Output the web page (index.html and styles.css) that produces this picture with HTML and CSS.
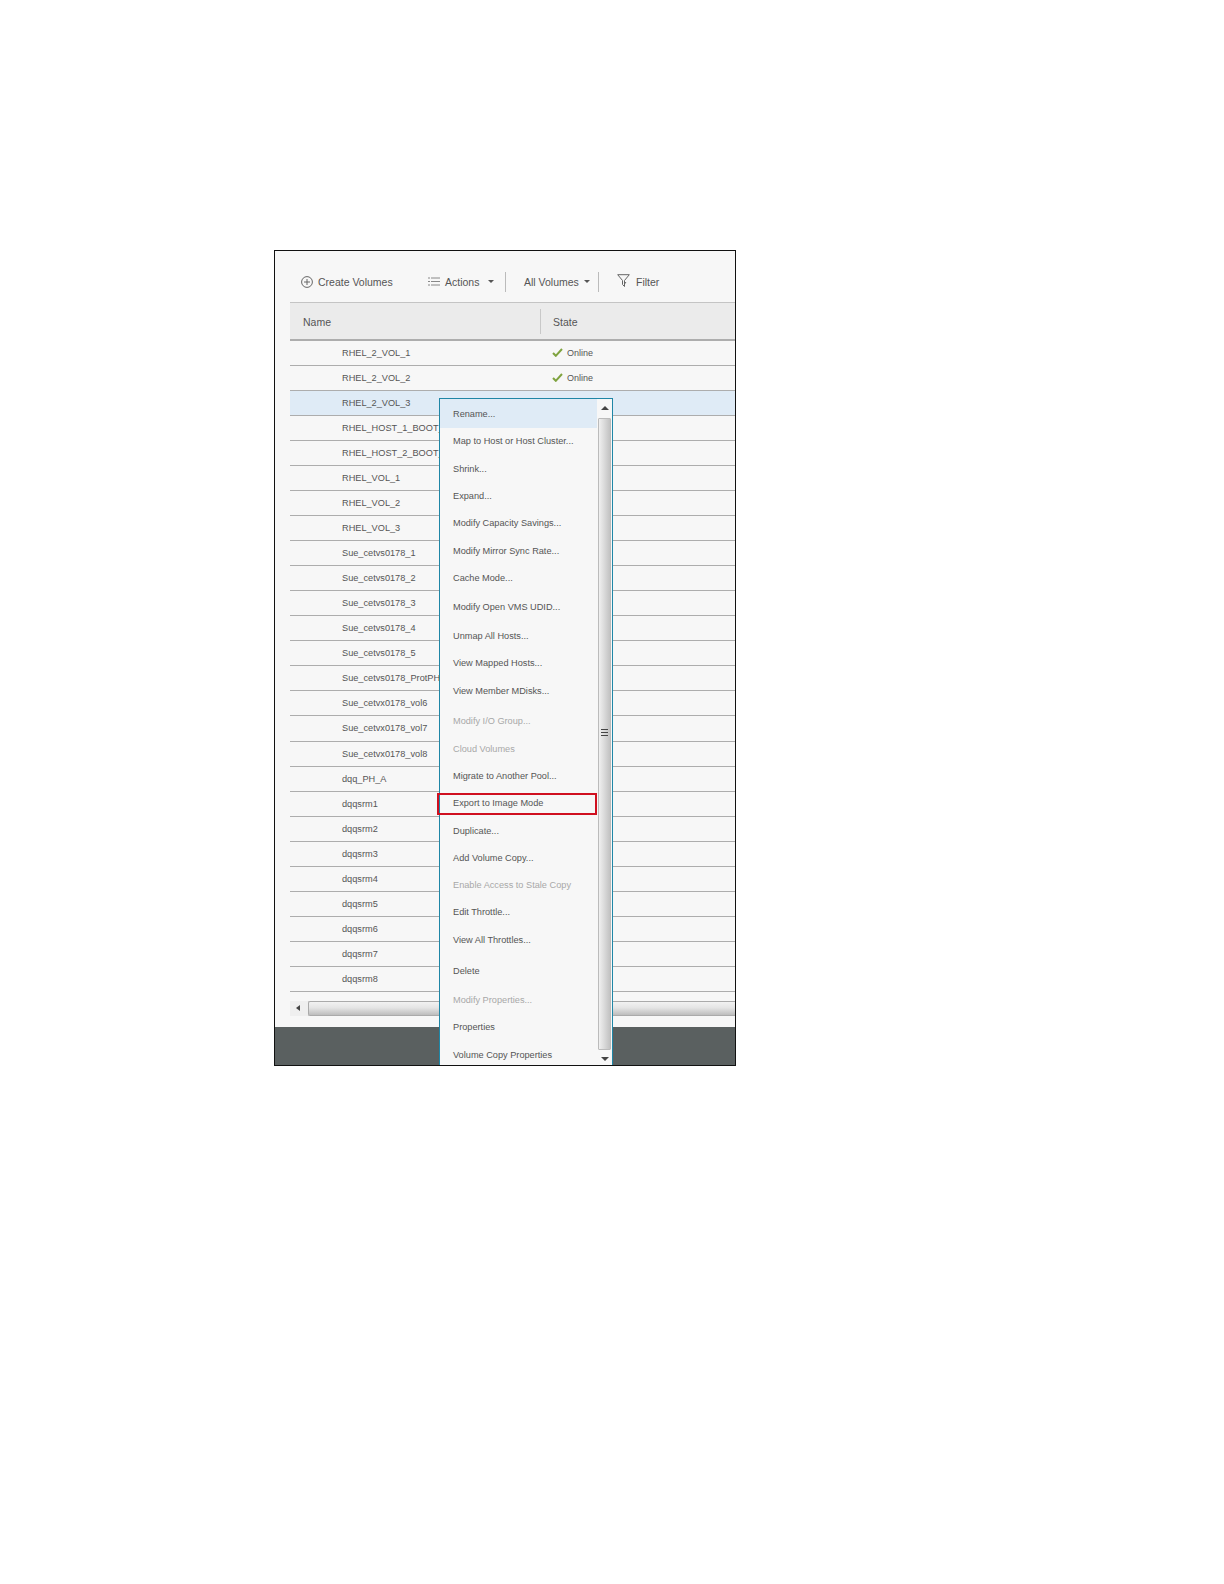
FILE: index.html
```html
<!DOCTYPE html>
<html lang="en">
<head>
<meta charset="utf-8">
<title>Volumes</title>
<link rel="stylesheet" href="styles.css">
</head>
<body>
<main class="frame">
  <div class="panel">
    <div class="toolbar">
      <div class="tool tool-create">
        <svg class="ico" width="12" height="12" viewBox="0 0 12 12"><circle cx="6" cy="6" r="5.400" fill="none" stroke="#666" stroke-width="1"/><path d="M6 3v6M3 6h6" stroke="#666" stroke-width="1" fill="none"/></svg>
        <span>Create Volumes</span>
      </div>
      <div class="tool tool-actions">
        <svg class="ico" width="12" height="9" viewBox="0 0 12 9"><path d="M0 1h2M3 1h9M0 4.500h2M3 4.500h9M0 8h2M3 8h9" stroke="#888" stroke-width="1" fill="none"/></svg>
        <span>Actions</span>
        <i class="caret"></i>
      </div>
      <div class="tool tool-all">
        <span>All Volumes</span>
        <i class="caret"></i>
      </div>
      <div class="tool tool-filter">
        <svg class="ico ico-filter" width="13" height="14" viewBox="0 0 13 14"><path d="M.7.700h11.600L7.500 6.500v6L5.500 10.500v-4z" fill="none" stroke="#666" stroke-width="1"/><path d="M9 8l-1.500 2" stroke="#666" fill="none"/></svg>
        <span>Filter</span>
      </div>
    </div>
    <div class="table">
      <div class="thead">
        <div class="th th-name">Name</div>
        <div class="th th-state">State</div>
      </div>
      <div class="row"><span class="name">RHEL_2_VOL_1</span><span class="state"><svg class="check" width="11" height="9" viewBox="0 0 11 9"><path d="M1 5l2.800 2.800L10 1" fill="none" stroke="#7fa33f" stroke-width="2"/></svg>Online</span></div>
      <div class="row"><span class="name">RHEL_2_VOL_2</span><span class="state"><svg class="check" width="11" height="9" viewBox="0 0 11 9"><path d="M1 5l2.800 2.800L10 1" fill="none" stroke="#7fa33f" stroke-width="2"/></svg>Online</span></div>
      <div class="row row-selected"><span class="name">RHEL_2_VOL_3</span></div>
      <div class="row"><span class="name">RHEL_HOST_1_BOOT_</span></div>
      <div class="row"><span class="name">RHEL_HOST_2_BOOT_</span></div>
      <div class="row"><span class="name">RHEL_VOL_1</span></div>
      <div class="row"><span class="name">RHEL_VOL_2</span></div>
      <div class="row"><span class="name">RHEL_VOL_3</span></div>
      <div class="row"><span class="name">Sue_cetvs0178_1</span></div>
      <div class="row"><span class="name">Sue_cetvs0178_2</span></div>
      <div class="row"><span class="name">Sue_cetvs0178_3</span></div>
      <div class="row"><span class="name">Sue_cetvs0178_4</span></div>
      <div class="row"><span class="name">Sue_cetvs0178_5</span></div>
      <div class="row"><span class="name">Sue_cetvs0178_ProtPH</span></div>
      <div class="row"><span class="name">Sue_cetvx0178_vol6</span></div>
      <div class="row"><span class="name">Sue_cetvx0178_vol7</span></div>
      <div class="row"><span class="name">Sue_cetvx0178_vol8</span></div>
      <div class="row"><span class="name">dqq_PH_A</span></div>
      <div class="row"><span class="name">dqqsrm1</span></div>
      <div class="row"><span class="name">dqqsrm2</span></div>
      <div class="row"><span class="name">dqqsrm3</span></div>
      <div class="row"><span class="name">dqqsrm4</span></div>
      <div class="row"><span class="name">dqqsrm5</span></div>
      <div class="row"><span class="name">dqqsrm6</span></div>
      <div class="row"><span class="name">dqqsrm7</span></div>
      <div class="row"><span class="name">dqqsrm8</span></div>
    </div>
    <div class="hscroll">
      <span class="arrow-left"></span>
      <div class="hthumb"></div>
    </div>
    <div class="footer"></div>
  </div>
  <div class="menu">
    <ul class="items">
      <li class="item h27 active">Rename...</li>
      <li class="item h28">Map to Host or Host Cluster...</li>
      <li class="item h27">Shrink...</li>
      <li class="item h27">Expand...</li>
      <li class="item h28">Modify Capacity Savings...</li>
      <li class="item h27">Modify Mirror Sync Rate...</li>
      <li class="item h29">Cache Mode...</li>
      <li class="item h29">Modify Open VMS UDID...</li>
      <li class="item h27">Unmap All Hosts...</li>
      <li class="item h28">View Mapped Hosts...</li>
      <li class="item h30">View Member MDisks...</li>
      <li class="item h28 disabled">Modify I/O Group...</li>
      <li class="item h27 disabled">Cloud Volumes</li>
      <li class="item h27">Migrate to Another Pool...</li>
      <li class="item h28">Export to Image Mode</li>
      <li class="item h27">Duplicate...</li>
      <li class="item h27">Add Volume Copy...</li>
      <li class="item h27 disabled">Enable Access to Stale Copy</li>
      <li class="item h28">Edit Throttle...</li>
      <li class="item h31">View All Throttles...</li>
      <li class="item h29">Delete</li>
      <li class="item h27 disabled">Modify Properties...</li>
      <li class="item h28">Properties</li>
      <li class="item h27">Volume Copy Properties</li>
    </ul>
    <div class="vscroll">
      <span class="arrow-up"></span>
      <div class="vthumb"><i class="grip"></i></div>
      <span class="arrow-down"></span>
    </div>
    <div class="highlight"></div>
  </div>
</main>
</body>
</html>
```
FILE: styles.css
```css
* { box-sizing: border-box; }
html, body { margin: 0; padding: 0; background: #fff; }
body { width: 1224px; height: 1584px; padding: 250px 0 0 274px; font-family: "Liberation Sans", Arial, sans-serif; color: #555; }
.frame { position: relative; width: 462px; height: 816px; border: 1px solid #111; background: #f7f7f7; overflow: hidden; }
.panel { display: flex; flex-direction: column; height: 100%; }
.toolbar { display: flex; align-items: center; height: 51px; padding-top: 10px; margin-left: 15px; font-size: 10.500px; flex: none; white-space: nowrap; }
.tool { display: flex; align-items: center; height: 20px; }
.tool-create { gap: 5px; margin-left: 11px; width: 127px; }
.tool-actions { gap: 5px; width: 78px; border-right: 1px solid #bbb; }
.tool-actions .caret { margin-left: 4px; }
.tool-all { gap: 5px; width: 93px; padding-left: 18px; border-right: 1px solid #bbb; }
.tool-filter { gap: 6px; padding-left: 18px; }
.ico-filter { margin-top: -1px; }
.caret { width: 0; height: 0; border-left: 3px solid transparent; border-right: 3px solid transparent; border-top: 3px solid #555; }
.table { margin-left: 15px; flex: none; }
.thead { display: flex; align-items: center; height: 39px; background: #ebebeb; border-top: 1px solid #c4c4c4; border-bottom: 2px solid #adadad; font-size: 10.500px; }
.th { display: flex; align-items: center; height: 25px; padding: 2px 0 0 13px; }
.th-state { padding-left: 12px; }
.th-name { width: 251px; border-right: 1px solid #c8c8c8; }
.row { position: relative; display: flex; align-items: center; height: 25.040px; border-bottom: 1px solid #adadad; font-size: 9.200px; color: #555; }
.row-selected { background: #dfebf6; }
.name { width: 251px; padding-left: 52px; white-space: nowrap; }
.state { display: flex; align-items: center; gap: 4px; padding-left: 11px; font-size: 9px; }
.check { margin-top: -1px; }
.hscroll { display: flex; align-items: center; gap: 8px; height: 15px; margin: 9px 0 0 15px; background: #efefef; flex: none; }
.arrow-left { width: 0; height: 0; margin-left: 6px; border-top: 3px solid transparent; border-bottom: 3px solid transparent; border-right: 4px solid #444; }
.hthumb { flex: 1; height: 15px; border: 1px solid #aaa; border-right: 0; border-radius: 2px 0 0 2px; background: linear-gradient(#f2f2f2, #e4e4e4 45%, #bdbdbd); }
.footer { flex: 1; margin-top: 11px; background: #5a6060; }
.menu { position: absolute; left: 164px; top: 147px; display: flex; width: 174px; height: 668px; border: 1px solid #1f86a6; border-bottom: 0; background: #f7f7f7; }
.items { list-style: none; margin: 0; padding: 0; width: 157px; flex: none; font-size: 9.200px; color: #555; }
.item { padding-left: 13px; white-space: nowrap; line-height: 31px; }
.h27 { height: 27px; }
.h28 { height: 28px; }
.h29 { height: 29px; }
.h30 { height: 30px; }
.h31 { height: 31px; }
.item.active { background: #dfebf6; height: 29px; margin-bottom: -2px; }
.item.disabled { color: #a8a8a8; }
.vscroll { display: flex; flex-direction: column; align-items: center; width: 15px; flex: 1; }
.arrow-up { width: 0; height: 0; margin: 7px 0 8px; border-left: 4px solid transparent; border-right: 4px solid transparent; border-bottom: 4px solid #444; }
.vthumb { display: flex; align-items: center; justify-content: center; flex: 1; width: 13px; background: linear-gradient(90deg, #f0f0f0, #c2c2c2); border: 1px solid #bbb; border-radius: 1px; }
.grip { width: 7px; height: 7px; margin-bottom: 4px; border-top: 1px solid #444; border-bottom: 1px solid #444; background: linear-gradient(#444, #444) center / 100% 1px no-repeat; }
.arrow-down { width: 0; height: 0; margin: 7px 0 5px; border-left: 4px solid transparent; border-right: 4px solid transparent; border-top: 4px solid #444; }
.highlight { position: absolute; left: -3px; top: 394px; width: 160px; height: 22px; border: 2px solid #d01020; }
```
